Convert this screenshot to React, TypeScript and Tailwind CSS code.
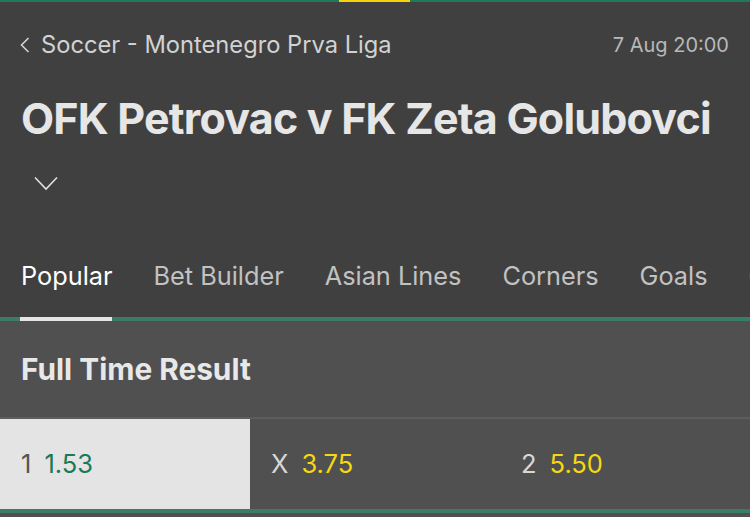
const tabs = ["Popular", "Bet Builder", "Asian Lines", "Corners", "Goals", "Cards"];

const odds = [
  { label: "1", price: "1.53", selected: true },
  { label: "X", price: "3.75", selected: false },
  { label: "2", price: "5.50", selected: false },
];

export default function App() {
  return (
    <div className="w-[750px] h-[517px] overflow-hidden bg-[#505050] font-['Inter','Roboto',sans-serif]">
      <div className="flex h-[2px]">
        <div className="w-[339px] bg-[#1f7a58]" />
        <div className="w-[71px] bg-[#f5d20a]" />
        <div className="flex-1 bg-[#1f7a58]" />
      </div>

      <header className="bg-[#404040]">
        <div className="h-[86px] flex items-center justify-between pl-[20px] pr-[21px]">
          <div className="flex items-center gap-[11px] text-[23.7px] text-[#d2d2d2]">
            <svg width="10" height="16" viewBox="0 0 10 16" fill="none" stroke="currentColor" strokeWidth="1.6">
              <polyline points="8.5,1 1.5,8 8.5,15" />
            </svg>
            <span>Soccer - Montenegro Prva Liga</span>
          </div>
          <span className="text-[20px] text-[#b8b8b8]">7 Aug 20:00</span>
        </div>

        <h1 className="h-[60px] flex items-center px-[21px] text-[43px] font-bold tracking-[-0.8px] text-[#e6e6e6] whitespace-nowrap">
          OFK Petrovac v FK Zeta Golubovci
        </h1>

        <div className="h-[70px] flex items-center pl-[34px]">
          <svg width="24" height="15" viewBox="0 0 24 15" fill="none" stroke="#e0e0e0" strokeWidth="1.6">
            <polyline points="1,1.5 12,13 23,1.5" />
          </svg>
        </div>

        <nav className="h-[99px] flex items-start pt-[43px] pl-[21px] gap-[41px] whitespace-nowrap overflow-hidden">
          {tabs.map((t, i) => (
            <span
              key={t}
              className={`shrink-0 text-[25.3px] leading-[30px] ${i === 0 ? "text-white" : "text-[#c2c2c2]"}`}
            >
              {t}
            </span>
          ))}
        </nav>
      </header>

      <div className="flex h-[4px]">
        <div className="w-[20px] bg-[#3a7d62]" />
        <div className="w-[92px] bg-[#e4e4e4]" />
        <div className="flex-1 bg-[#3a7d62]" />
      </div>

      <section className="bg-[#505050]">
        <h2 className="h-[96px] flex items-center px-[21px] text-[29.8px] font-bold text-[#e8e8e8]">
          Full Time Result
        </h2>
        <div className="h-[2px] bg-[#5d5d5d]" />
        <div className="grid grid-cols-3 h-[90px]">
          {odds.map((o) => (
            <div
              key={o.label}
              className={`flex items-center gap-[13px] pl-[21px] text-[25.5px] ${o.selected ? "bg-[#e4e4e4]" : "bg-[#505050]"}`}
            >
              <span className={o.selected ? "text-[#555555]" : "text-[#d8d8d8]"}>{o.label}</span>
              <span className={o.selected ? "text-[#1a7a58]" : "text-[#f7d712]"}>{o.price}</span>
            </div>
          ))}
        </div>
        <div className="h-[4px] bg-[#3a7d62]" />
      </section>
    </div>
  );
}
